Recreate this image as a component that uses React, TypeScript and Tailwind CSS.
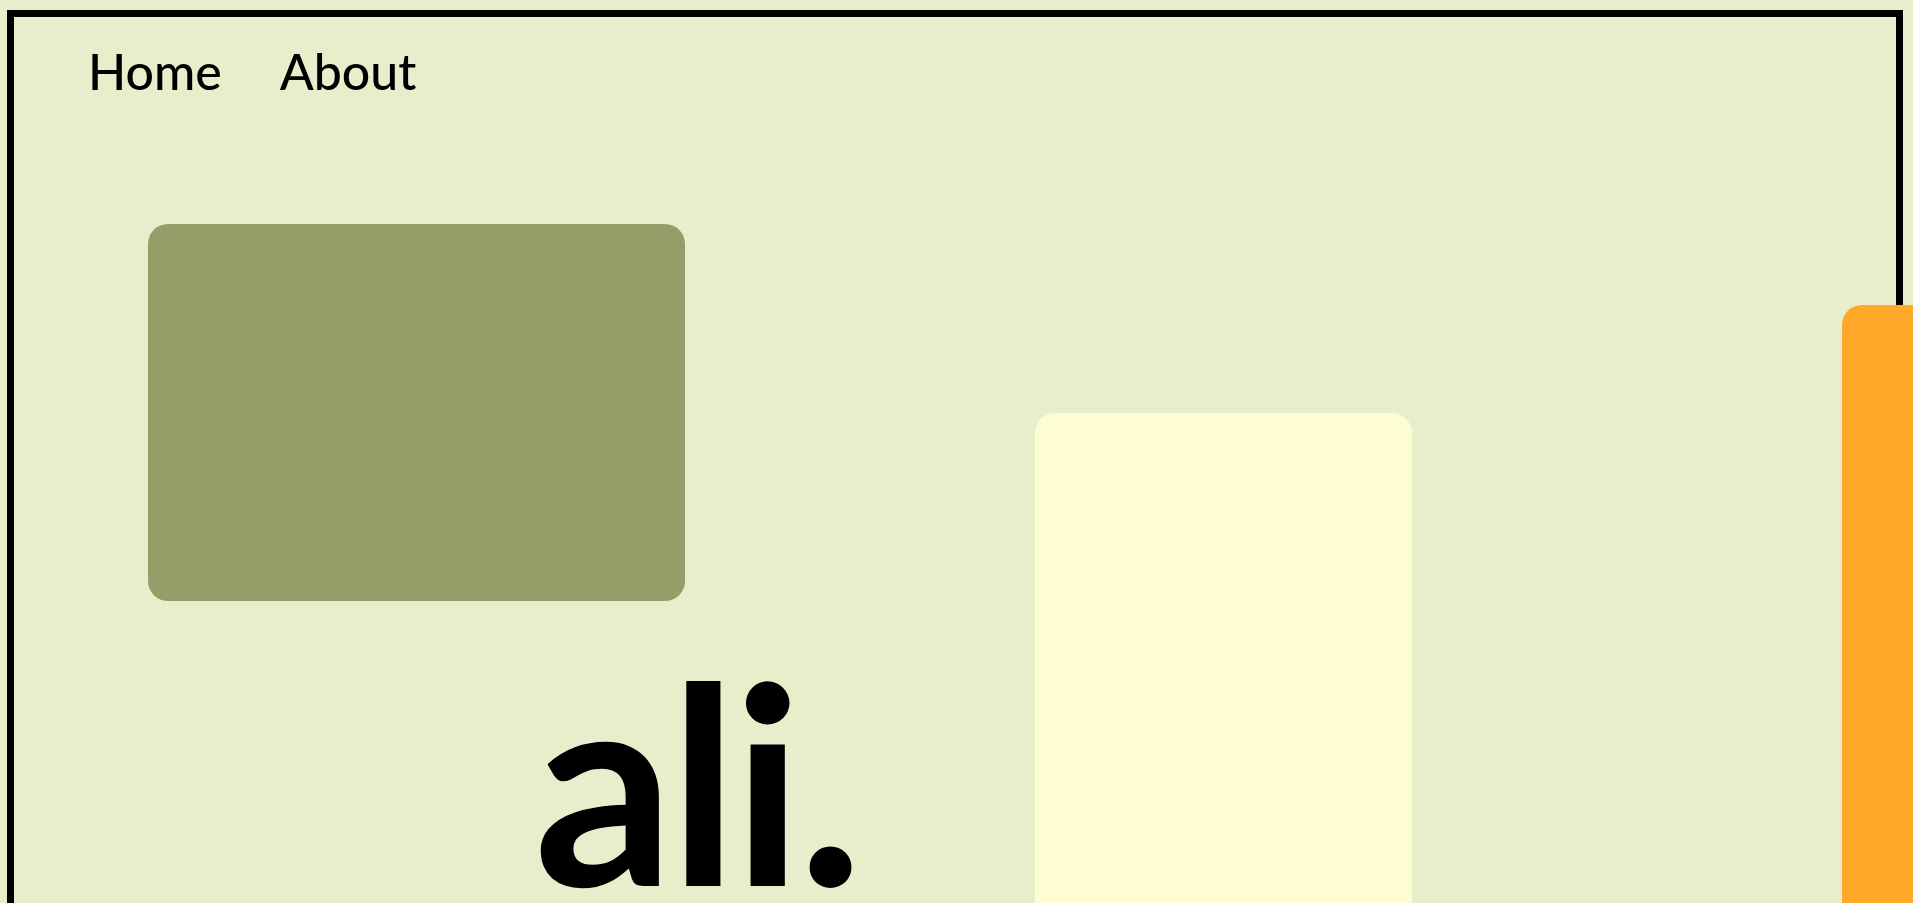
import React from "react";

export default function App() {
  return (
    <div className="h-[903px] w-full overflow-hidden bg-[#e8edcb] font-['Lato',sans-serif] text-black">
      <div className="ml-[7px] mr-[10px] mt-[10px] h-[1200px] border-[7px] border-black">
        <nav className="flex gap-[58px] pl-[74px] pt-[29px] text-[50px] font-medium leading-none">
          <a href="#">Home</a>
          <a href="#">About</a>
        </nav>
        <div className="flex items-start">
          <div className="ml-[134px] mt-[128px] w-[537px] shrink-0">
            <div className="h-[377px] w-[537px] rounded-[20px] bg-[#979d69]" />
            <h1 className="ml-[386px] mt-[41px] whitespace-nowrap text-[276px] font-bold leading-none tracking-[-5px]">ali.</h1>
          </div>
          <div className="ml-[350px] mt-[317px] h-[700px] w-[377px] shrink-0 rounded-[20px] bg-[#fdfdd1]" />
          <div className="relative z-10 ml-[430px] mt-[209px] h-[800px] w-[300px] shrink-0 rounded-[20px] bg-[#ffa829]" />
        </div>
      </div>
    </div>
  );
}
